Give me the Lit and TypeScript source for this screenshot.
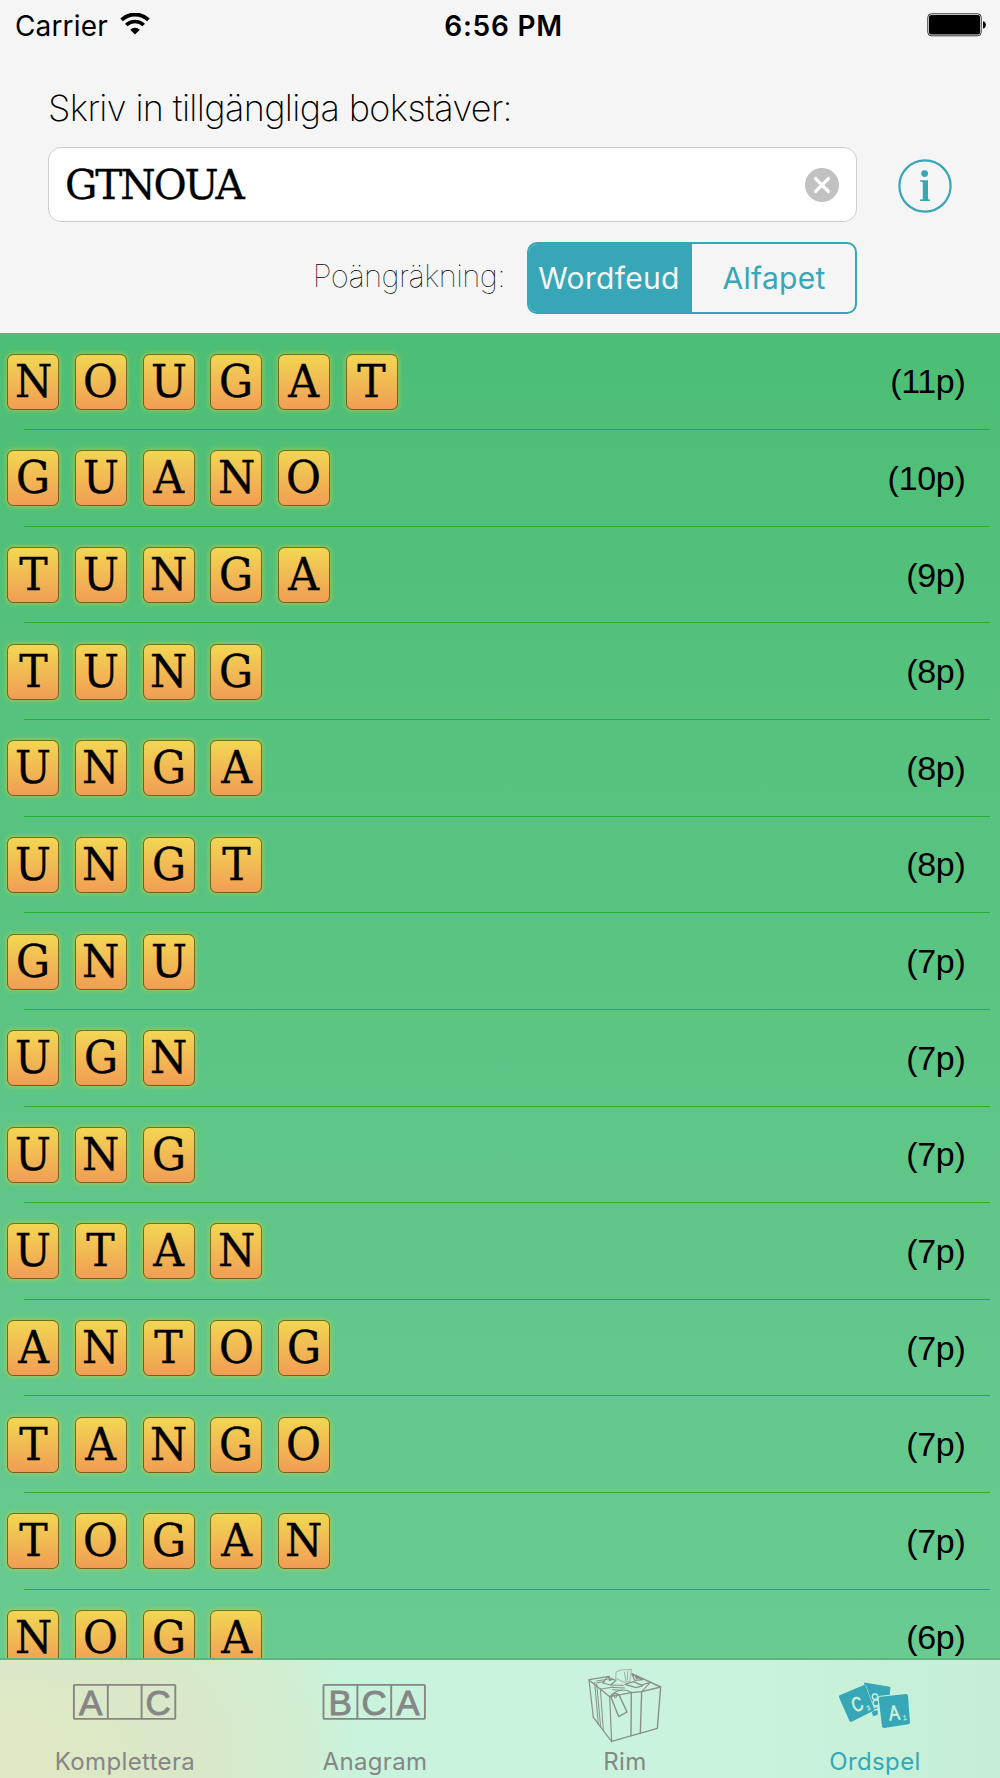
import { LitElement, html, svg, css } from "lit";
import { customElement, property, state } from "lit/decorators.js";
import { classMap } from "lit/directives/class-map.js";

interface WordScore {
  word: string;
  points: number;
}

const WORDS: WordScore[] = [
  { word: "NOUGAT", points: 11 },
  { word: "GUANO", points: 10 },
  { word: "TUNGA", points: 9 },
  { word: "TUNG", points: 8 },
  { word: "UNGA", points: 8 },
  { word: "UNGT", points: 8 },
  { word: "GNU", points: 7 },
  { word: "UGN", points: 7 },
  { word: "UNG", points: 7 },
  { word: "UTAN", points: 7 },
  { word: "ANTOG", points: 7 },
  { word: "TANGO", points: 7 },
  { word: "TOGAN", points: 7 },
  { word: "NOGA", points: 6 },
];

@customElement("status-bar")
class StatusBar extends LitElement {
  static styles = css`
    :host {
      display: grid;
      grid-template-columns: 1fr auto 1fr;
      align-items: center;
      height: 51px;
      padding: 0 13px 0 15px;
      font-family: Inter, sans-serif;
      font-size: 28px;
      line-height: 34px;
      color: #000;
    }
    .carrier {
      display: flex;
      align-items: center;
      gap: 12px;
    }
    .carrier span {
      letter-spacing: 0.15px;
    }
    .wifi {
      width: 30px;
      height: 22px;
      margin-top: -3px;
    }
    .time {
      font-weight: 600;
      letter-spacing: 0.75px;
      padding-left: 5px;
    }
    .battery {
      justify-self: end;
      width: 60px;
      height: 24px;
      margin-top: -2px;
    }
  `;

  render() {
    return html`
      <div class="carrier">
        <span>Carrier</span>
        <svg class="wifi" viewBox="0 0 30 22">
          <path d="M1.6 6.8A19.5 19.5 0 0 1 28.4 6.8" fill="none" stroke="#000" stroke-width="3.9" />
          <path d="M6.3 12A12.6 12.6 0 0 1 23.7 12" fill="none" stroke="#000" stroke-width="3.7" />
          <path d="M10.2 16.7A7 7 0 0 1 19.8 16.7L15 21.6Z" />
        </svg>
      </div>
      <div class="time">6:56 PM</div>
      <svg class="battery" viewBox="0 0 60 24">
        <rect x="0.8" y="0.8" width="53.4" height="22" rx="3.5" fill="none" stroke="#333" stroke-width="1" />
        <rect x="2" y="2" width="51" height="19.6" rx="2" />
        <path d="M56 8.2C59.8 8.6 59.8 15 56 15.6Z" />
      </svg>
    `;
  }
}

@customElement("search-panel")
class SearchPanel extends LitElement {
  @property() letters = "";
  @state() private mode = 0;

  static styles = css`
    :host {
      display: block;
      padding: 35px 48px 0 48px;
      color: #000;
    }
    .prompt {
      height: 44px;
      font: 200 36px/44px Inter, sans-serif;
      letter-spacing: -0.63px;
      white-space: nowrap;
    }
    .entry {
      display: flex;
      align-items: center;
      justify-content: space-between;
      margin-top: 17px;
    }
    .field {
      box-sizing: border-box;
      display: flex;
      align-items: center;
      justify-content: space-between;
      width: 809px;
      height: 75px;
      padding: 0 17px 0 16px;
      background: #fff;
      border: 1.5px solid #cdcdcd;
      border-radius: 13px;
    }
    .letters {
      font: 40.5px/50px "DejaVu Serif", serif;
      letter-spacing: -2.1px;
      -webkit-text-stroke: 0.3px #000;
    }
    .clear {
      width: 34px;
      height: 34px;
    }
    .info {
      width: 54px;
      height: 54px;
      margin-top: 2px;
    }
    .scoring {
      display: flex;
      align-items: center;
      justify-content: flex-end;
      gap: 22px;
      margin: 20px 95px 0 0;
    }
    .caption {
      font: 100 31px/38px Inter, sans-serif;
      letter-spacing: -0.6px;
      margin-top: -4px;
    }
    .segments {
      box-sizing: border-box;
      display: grid;
      grid-template-columns: 1fr 1fr;
      width: 330px;
      height: 72px;
      border: 2px solid #37a6b7;
      border-radius: 10px;
      overflow: hidden;
    }
    .segment {
      display: flex;
      align-items: center;
      justify-content: center;
      padding: 0 0 1px 1px;
      font: 30px/36px Inter, sans-serif;
      letter-spacing: 0.3px;
      color: #37a6b7;
    }
    .selected {
      padding: 0 3px 1px 0;
      background: #37a6b7;
      color: #f5f5f5;
    }
  `;

  render() {
    return html`
      <div class="prompt">Skriv in tillgängliga bokstäver:</div>
      <div class="entry">
        <div class="field">
          <span class="letters">${this.letters}</span>
          <svg class="clear" viewBox="0 0 34 34">
            <circle cx="17" cy="17" r="17" fill="#c1c1c1" />
            <path d="M10.6 10.6 23.4 23.4M23.4 10.6 10.6 23.4" stroke="#fff" stroke-width="3.4" stroke-linecap="round" />
          </svg>
        </div>
        <svg class="info" viewBox="0 0 54 54" fill="#37a6b7">
          <circle cx="27" cy="27" r="25.6" fill="none" stroke="#37a6b7" stroke-width="2.2" />
          <circle cx="26.6" cy="14.6" r="3.4" />
          <path d="M22 21.2H30V40.2L32 40.6V42H22V40.6L24.8 40.2V23L22 22.5Z" />
        </svg>
      </div>
      <div class="scoring">
        <span class="caption">Poängräkning:</span>
        <div class="segments">
          ${["Wordfeud", "Alfapet"].map(
            (name, i) => html`<div
              class=${classMap({ segment: true, selected: this.mode === i })}
              @click=${() => (this.mode = i)}
            >
              ${name}
            </div>`
          )}
        </div>
      </div>
    `;
  }
}

@customElement("word-row")
class WordRow extends LitElement {
  @property() word = "";
  @property({ type: Number }) points = 0;

  static styles = css`
    :host {
      display: flex;
      flex-direction: column;
      height: 96.64px;
      flex: none;
    }
    .content {
      flex: 1;
      display: flex;
      align-items: center;
      justify-content: space-between;
      padding: 0.9px 34.5px 0 7.2px;
    }
    .tiles {
      display: flex;
      gap: 15.7px;
    }
    .tile {
      box-sizing: border-box;
      display: flex;
      align-items: center;
      justify-content: center;
      width: 52px;
      height: 56px;
      border: 1.5px solid rgba(70, 75, 20, 0.75);
      border-radius: 6.5px;
      background: linear-gradient(#f2d853, #f19c54) border-box;
      box-shadow: 0 0 4px 0.5px rgba(205, 205, 50, 0.6);
      font: 44.7px/52px "DejaVu Serif Condensed", "DejaVu Serif", serif;
      color: #000;
    }
    .glyph {
      transform: scaleX(1.06);
      -webkit-text-stroke: 0.35px #000;
    }
    .score {
      font: 34px/40px "Liberation Sans", sans-serif;
      letter-spacing: -0.3px;
      color: #000;
      margin-top: -1px;
    }
    .line {
      height: 1px;
      margin: 0 10px 0 24px;
      background: #27b02f;
    }
  `;

  render() {
    return html`
      <div class="content">
        <div class="tiles">
          ${[...this.word].map(
            (letter) => html`<div class="tile"><span class="glyph">${letter}</span></div>`
          )}
        </div>
        <span class="score">(${this.points}p)</span>
      </div>
      <div class="line"></div>
    `;
  }
}

const letterBoxes = (letters: string[], x: number) => svg`
  <g fill="none" stroke="#868686" stroke-width="1.9">
    <rect x=${x + 0.9} y="20.9" width="101.4" height="34" rx="0.8" />
    <path d="M${x + 34.8} 21V55M${x + 68.6} 21V55" />
  </g>
  ${letters.map(
    (l, i) => svg`<text x=${x + 17.8 + i * 33.8} y="50.8" text-anchor="middle"
      font-family="Liberation Sans, sans-serif" font-size="35" fill="#868686"
      stroke="#868686" stroke-width="0.9">${l}</text>`
  )}
`;

const giftIcon = svg`
  <g fill="none" stroke="#8b8f8b" stroke-width="4.2" stroke-linejoin="round" stroke-linecap="round">
    <path d="M57 75 119 125 125 260 70 187Z" stroke-width="3.6" />
    <path d="M125 259 262 220 272 96 215 110 184 113 119 125" />
    <path d="M57 74 118 64M272 96 186 56M215 110 211 234M184 112 183 241" />
    <path d="M74 82 85 208M80 86 92 216M91 100 100 226" stroke-width="3" />
    <path d="M119 124C135 108 158 98 184 112M94 102 130 96M215 110 241 82 215 90" stroke-width="3.2" />
    <path d="M123 126 134 114 147 119 171 171 146 185Z" />
    <circle cx="136" cy="125" r="3.4" stroke-width="2.8" />
    <path d="M138 52 152 45 184 43 180 78 162 82 137 70Z" stroke="#adb8ae" stroke-width="3.4" />
    <path d="M112 66 138 76 122 90 98 84ZM186 58 218 74 194 76ZM165 88 190 80 218 92 198 98Z" stroke-width="3.6" />
    <path d="M123 90 160 91M126 97 164 99M128 104 156 106M80 78 112 73M82 83 104 80" stroke-width="3" />
    <path d="M163 52 168 78M173 50 172 74" stroke="#a3ada4" stroke-width="3" />
    <path d="M113 69 130 74 118 78ZM194 62 210 70 198 72Z" fill="#7f867f" stroke="none" />
  </g>
`;

const cardsIcon = svg`
  <g fill="#37a6b7" stroke-linejoin="round">
    <path d="M133 54 210 67 207 92 168 94 172 148 160 152Z" stroke="#37a6b7" stroke-width="3" />
    <g fill="#37a6b7" stroke="#c9f2db" stroke-width="4">
      <circle cx="165" cy="95" r="8" />
      <circle cx="168" cy="114" r="9" />
      <path d="M160 128 172 124M163 136 174 132" />
    </g>
    <path d="M59 91 132 60Q135 59 137 63L162 131Q163 135 159 138L95 170Q90 172 88 167L57 97Q56 93 59 91Z"
      stroke="#c9f2db" stroke-width="3" paint-order="stroke" />
    <path d="M181 95 258 87Q263 87 264 92L270 172Q270 177 266 178L192 189Q187 189 186 184L176 101Q176 96 181 95Z"
      stroke="#c9f2db" stroke-width="5" paint-order="stroke" />
  </g>
  <g fill="#c9f2db" stroke="#c9f2db" font-family="Liberation Sans, sans-serif" text-anchor="middle">
    <text transform="translate(119 137) rotate(-20) scale(.74 1)" font-size="60" stroke-width="2.4">C</text>
    <text transform="translate(148 135) rotate(-22)" font-size="20" stroke-width="0.6">3</text>
    <text transform="translate(225 164) rotate(-6) scale(.8 1)" font-size="61" stroke-width="2.4">A</text>
    <text transform="translate(255 165) rotate(-6)" font-size="21" stroke-width="0.6">1</text>
  </g>
`;

@customElement("tab-strip")
class TabStrip extends LitElement {
  static styles = css`
    :host {
      box-sizing: border-box;
      display: grid;
      grid-template-columns: repeat(4, 1fr);
      height: 120px;
      flex: none;
      border-top: 2px solid #5fb281;
      background: radial-gradient(ellipse 360px 230px at 0 85%, #e0e8c2 0%, #d9e8c9 55%, rgba(201, 243, 220, 0) 100%),
        linear-gradient(90deg, #d4edd0 0, #d2eed3 22%, #c9f3dc 35%, #c9f3dc 75%, #c6eed6 100%);
    }
    .tab {
      display: flex;
      flex-direction: column;
      align-items: center;
      padding-top: 4px;
      font: 24px/30px Inter, sans-serif;
      letter-spacing: 0.35px;
      color: #868686;
    }
    .active {
      color: #37a6b7;
    }
    .icon {
      width: 110px;
      height: 80px;
      margin-bottom: 3px;
    }
  `;

  render() {
    const tabs = [
      { name: "Komplettera", box: "0 0 110 80", icon: letterBoxes(["A", "", "C"], 3) },
      { name: "Anagram", box: "0 0 110 80", icon: letterBoxes(["B", "C", "A"], 2.6) },
      { name: "Rim", box: "0 27 330 240", icon: giftIcon },
      { name: "Ordspel", box: "0 -3 330 240", icon: cardsIcon, active: true },
    ];
    return tabs.map(
      (t) => html`<div class=${classMap({ tab: true, active: !!t.active })}>
        <svg class="icon" viewBox=${t.box}>${t.icon}</svg>
        <span>${t.name}</span>
      </div>`
    );
  }
}

@customElement("app-root")
class AppRoot extends LitElement {
  static styles = css`
    :host {
      display: flex;
      flex-direction: column;
      width: 1000px;
      height: 1778px;
      overflow: hidden;
      background: #f5f5f5;
    }
    .header {
      box-sizing: border-box;
      height: 333px;
      flex: none;
    }
    .list {
      display: flex;
      flex-direction: column;
      flex: 1;
      min-height: 0;
      padding-top: 0.5px;
      overflow: hidden;
      background: linear-gradient(#4dbe76, #69cb91);
    }
  `;

  render() {
    return html`
      <div class="header">
        <status-bar></status-bar>
        <search-panel letters="GTNOUA"></search-panel>
      </div>
      <div class="list">
        ${WORDS.map((w) => html`<word-row word=${w.word} points=${w.points}></word-row>`)}
      </div>
      <tab-strip></tab-strip>
    `;
  }
}
